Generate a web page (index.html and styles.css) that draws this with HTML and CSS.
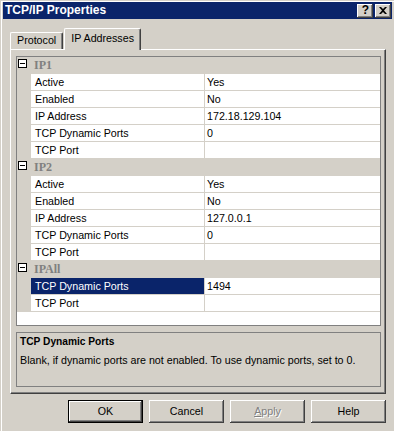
FILE: index.html
```html
<!DOCTYPE html>
<html lang="en">
<head>
<meta charset="utf-8"/>
<title>TCP/IP Properties</title>
<link rel="stylesheet" href="styles.css">
</head>
<body>
<div class="window">
    <div class="titlebar">
        <span class="title">TCP/IP Properties</span>
        <div class="cap_btns">
            <span class="cap_btn help">?</span>
            <span class="cap_btn close">
                <svg width="8" height="7" viewBox="0 0 8 7"><path d="M0 0h2l2 2 2-2h2L5 3.5 8 7H6L4 5 2 7H0l3-3.5z" fill="#000"/></svg>
            </span>
        </div>
    </div><!-- titlebar -->

    <div class="content">
        <div class="tabs">
            <div class="tab">Protocol</div>
            <div class="tab on">IP Addresses</div>
        </div>

        <div class="panel">
            <div class="grid">
                <div class="row cat"><span class="m"><i class="toggle"></i></span><span class="n">IP1</span></div>
                <div class="row"><span class="m"></span><span class="n">Active</span><span class="v">Yes</span></div>
                <div class="row"><span class="m"></span><span class="n">Enabled</span><span class="v">No</span></div>
                <div class="row"><span class="m"></span><span class="n">IP Address</span><span class="v">172.18.129.104</span></div>
                <div class="row"><span class="m"></span><span class="n">TCP Dynamic Ports</span><span class="v">0</span></div>
                <div class="row"><span class="m"></span><span class="n">TCP Port</span><span class="v"></span></div>

                <div class="row cat"><span class="m"><i class="toggle"></i></span><span class="n">IP2</span></div>
                <div class="row"><span class="m"></span><span class="n">Active</span><span class="v">Yes</span></div>
                <div class="row"><span class="m"></span><span class="n">Enabled</span><span class="v">No</span></div>
                <div class="row"><span class="m"></span><span class="n">IP Address</span><span class="v">127.0.0.1</span></div>
                <div class="row"><span class="m"></span><span class="n">TCP Dynamic Ports</span><span class="v">0</span></div>
                <div class="row"><span class="m"></span><span class="n">TCP Port</span><span class="v"></span></div>

                <div class="row cat"><span class="m"><i class="toggle"></i></span><span class="n">IPAll</span></div>
                <div class="row sel"><span class="m"></span><span class="n">TCP Dynamic Ports</span><span class="v">1494</span></div>
                <div class="row"><span class="m"></span><span class="n">TCP Port</span><span class="v"></span></div>
                <div class="filler"></div>
            </div><!-- grid -->

            <div class="desc">
                <div class="desc_title">TCP Dynamic Ports</div>
                <div class="desc_text">Blank, if dynamic ports are not enabled. To use dynamic ports, set to 0.</div>
            </div><!-- desc -->
        </div><!-- panel -->

        <div class="buttons">
            <span class="btn def">OK</span>
            <span class="btn">Cancel</span>
            <span class="btn off"><u>A</u>pply</span>
            <span class="btn">Help</span>
        </div>
    </div><!-- content -->
</div><!-- window -->
</body>
</html>
```

FILE: styles.css
```css
*{margin:0;padding:0;box-sizing:border-box;}
html,body{width:394px;height:431px;overflow:hidden;}
body{
    background:#d4d0c8;
    font-family:"Liberation Sans",Arial,sans-serif;
    font-size:10.7px;color:#000;}

/* window frame */
.window{
    height:431px;
    padding:2px 2px 0 3px;
    box-shadow:inset 1px 1px 0 #d4d0c8, inset 2px 2px 0 #fff;}

.titlebar{
    display:flex;
    justify-content:space-between;align-items:center;
    height:17px;
    padding:0 1px 0 2px;
    background:#0a246a;}

.title{
    color:#fff;font-weight:bold;font-size:12px;
    line-height:17px;}

.cap_btns{display:flex;gap:2px;}

.cap_btn{
    display:flex;
    justify-content:center;align-items:center;
    width:16px;height:14px;
    background:#d4d0c8;
    box-shadow:inset -1px -1px 0 #404040, inset 1px 1px 0 #fff, inset -2px -2px 0 #808080;
    font-weight:bold;font-size:12px;line-height:14px;}

.cap_btn.help{padding:0 0 1px 1px;}

/* tabs */
.content{padding:9px 6px 0 7px;}

.tabs{
    display:flex;
    align-items:flex-end;
    position:relative;z-index:2;
    height:22px;
    margin-bottom:-1px;}

.tab{
    height:17px;
    margin-bottom:1px;
    padding:0 6px;
    line-height:15px;
    border:1px solid #fff;border-right-color:#404040;border-bottom:none;
    border-radius:2px 2px 0 0;
    box-shadow:inset -1px 0 0 #808080;
    background:#d4d0c8;}

.tab.on{
    height:22px;
    margin:0 0 0 1px;
    padding:2px 6px 0;
    line-height:14px;}

/* panel */
.panel{
    padding:6px 4px 6px 5px;
    border:1px solid #404040;border-top-color:#fff;border-left-color:#fff;
    box-shadow:inset -1px -1px 0 #808080;}

/* property grid */
.grid{
    border:1px solid #808080;
    background:#fff;}

.row{
    display:flex;
    height:17px;
    line-height:16px;}

.row .m{
    flex:none;
    width:14px;
    background:#d4d0c8;}

.row .n{
    flex:none;
    width:174px;
    padding-left:4px;
    border-right:1px solid #d4d0c8;
    border-bottom:1px solid #d4d0c8;
    white-space:nowrap;}

.row .v{
    flex:1;
    padding-left:2px;
    border-bottom:1px solid #d4d0c8;}

.row.cat{background:#d4d0c8;}
.row.cat .n{
    width:auto;
    padding-left:3px;
    border:none;
    font-family:"Liberation Serif","Times New Roman",serif;
    font-weight:bold;font-size:12px;
    color:#808080;}

.toggle{
    display:block;
    position:relative;
    width:9px;height:9px;
    margin:2px 0 0 1px;
    border:1px solid #000;
    background:#fff;}

.toggle::after{
    content:'';
    position:absolute;
    left:1px;top:3px;
    width:5px;height:1px;
    background:#000;}

.row.sel .n{
    background:#0a246a;
    color:#fff;}

.filler{height:13px;}

/* description */
.desc{
    height:55px;
    margin-top:6px;
    padding:2px 3px;
    border:1px solid #808080;}

.desc_title{font-weight:bold;font-size:10.2px;line-height:13px;}
.desc_text{margin-top:6px;line-height:13px;white-space:nowrap;}

/* buttons */
.buttons{
    display:flex;
    justify-content:flex-end;
    gap:6px;
    margin-top:6px;}

.btn{
    width:75px;height:23px;
    text-align:center;
    line-height:22px;
    box-shadow:inset -1px -1px 0 #404040, inset 1px 1px 0 #fff, inset -2px -2px 0 #808080;}

.btn.def{
    border:1px solid #000;
    line-height:20px;}

.btn.off{
    color:#808080;
    text-shadow:1px 1px 0 #fff;}
```
